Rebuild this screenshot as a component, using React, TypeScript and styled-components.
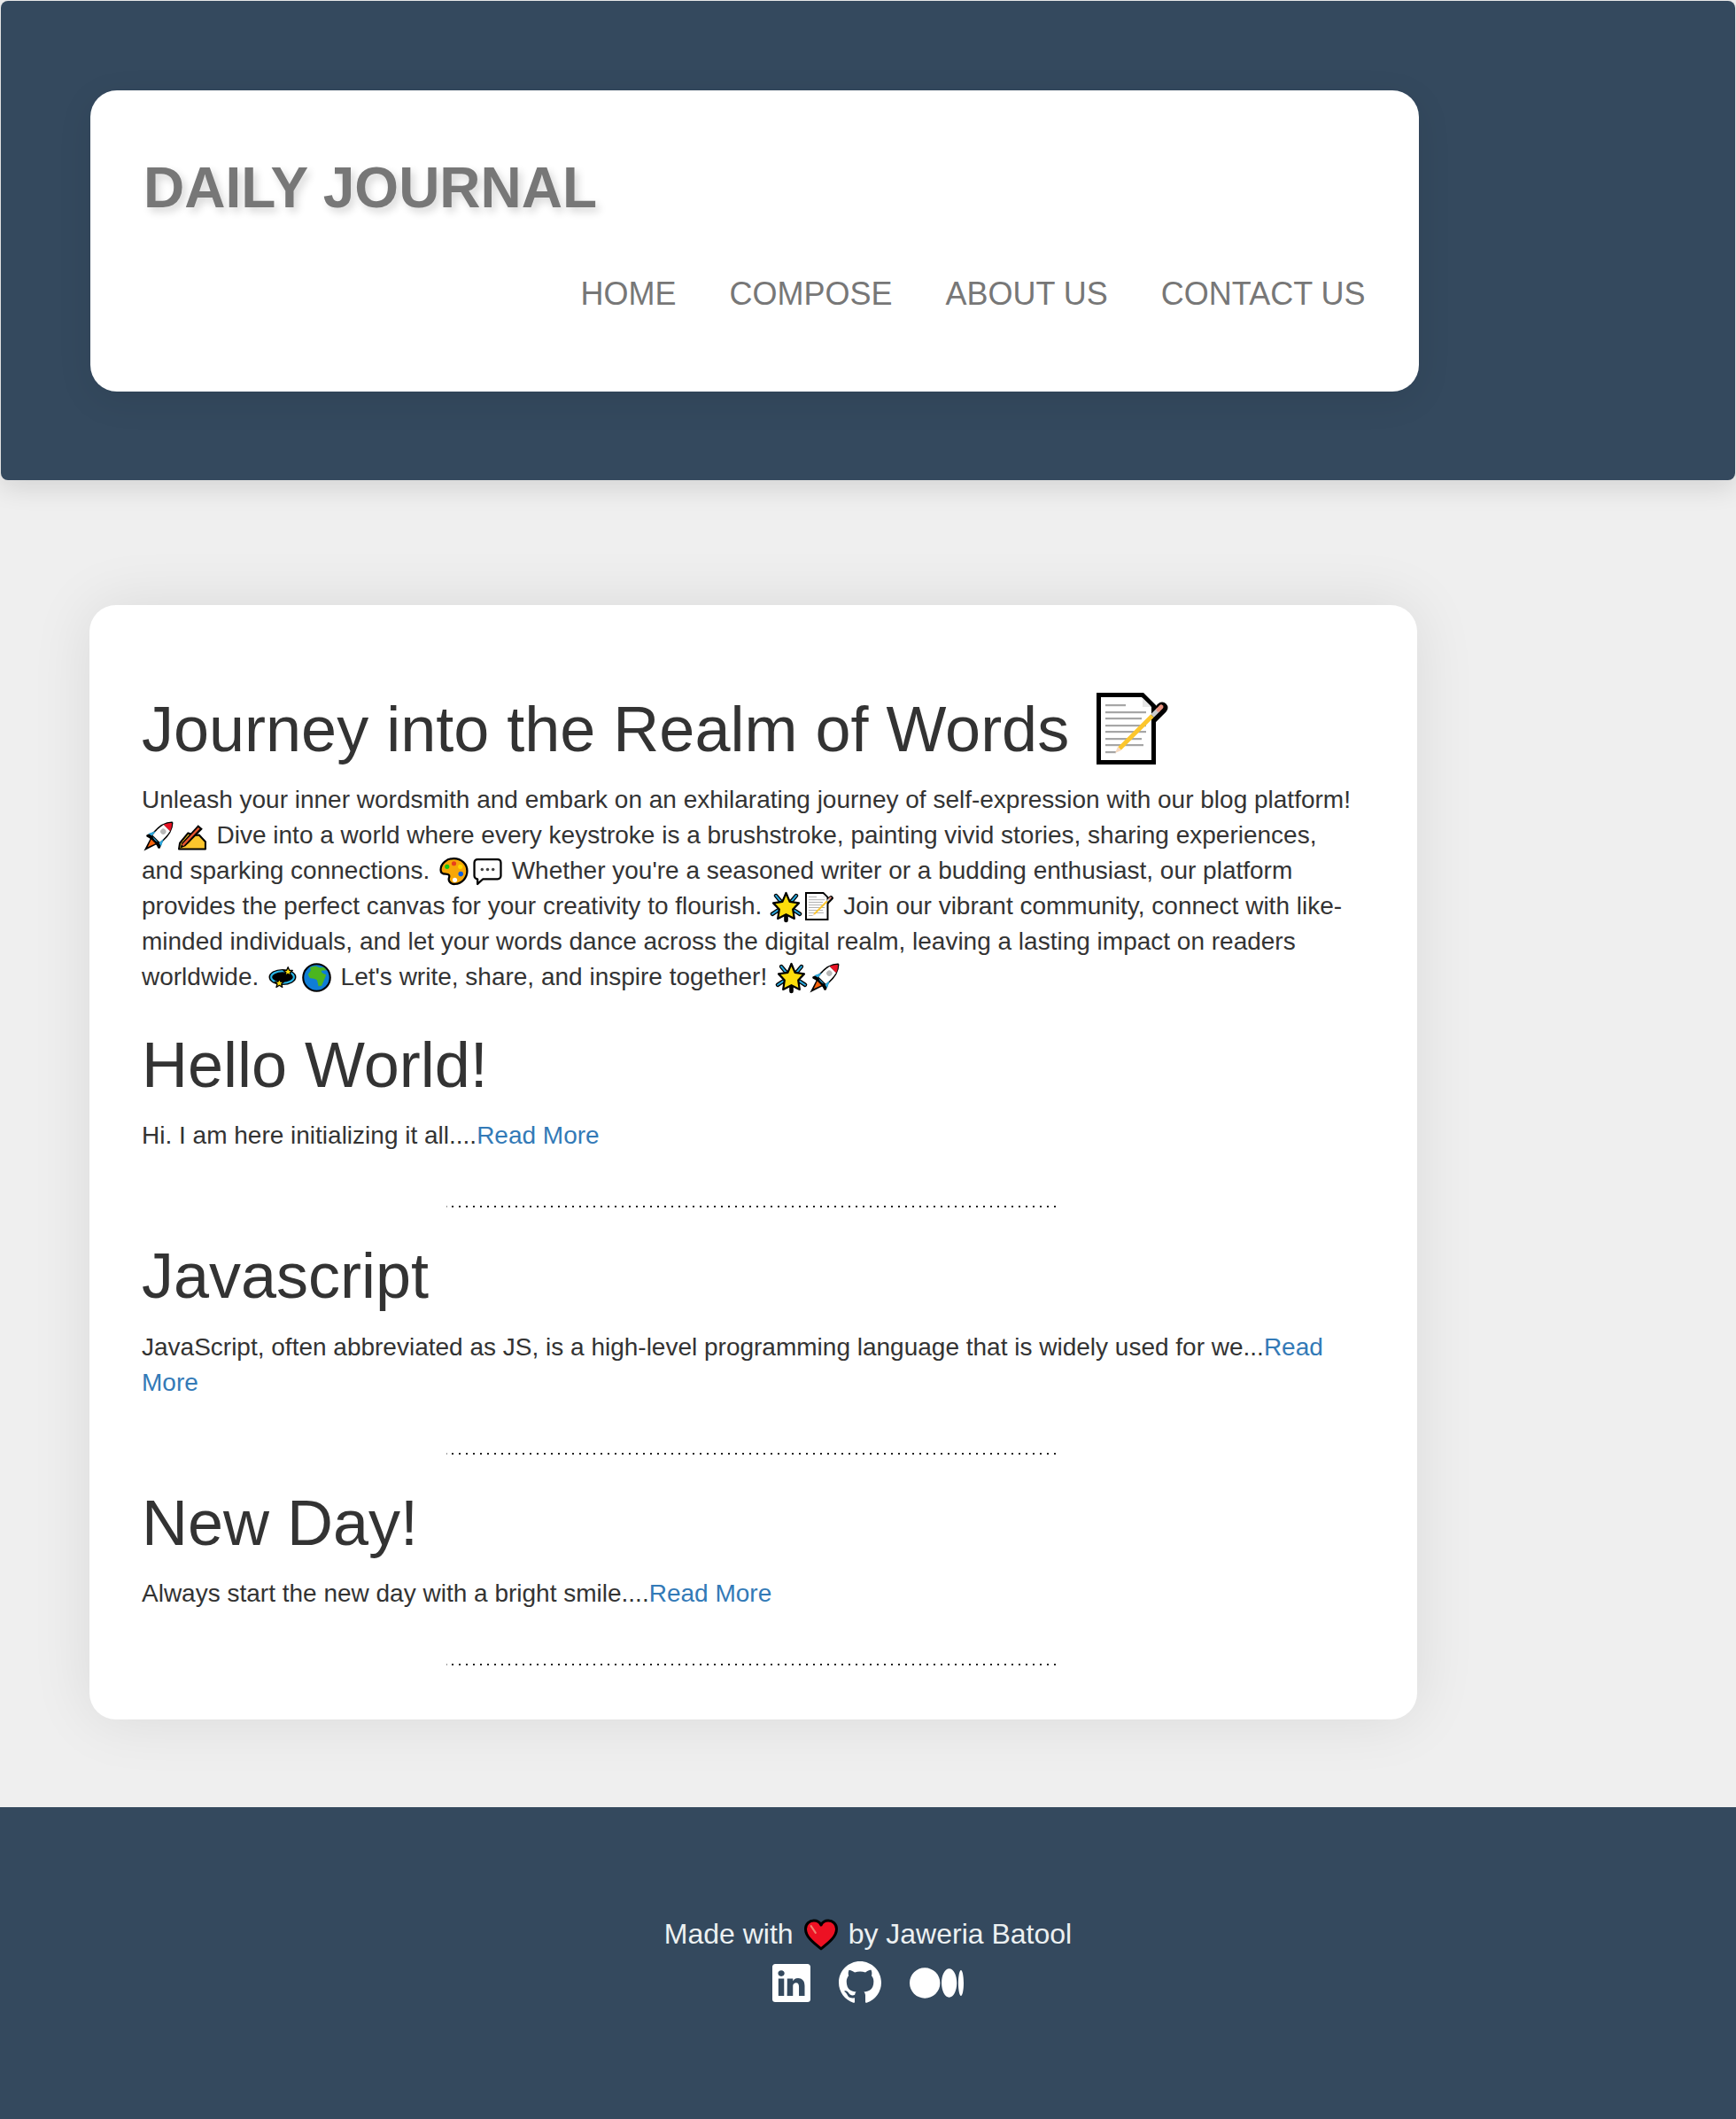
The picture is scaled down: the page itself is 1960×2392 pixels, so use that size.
import React from 'react';
import styled, { createGlobalStyle } from 'styled-components';
import { BsGithub, BsLinkedin, BsMedium } from 'react-icons/bs';

const GlobalStyle = createGlobalStyle`
  html, body {
    margin: 0;
    padding: 0;
    background: #efefef;
  }
  * {
    box-sizing: border-box;
  }
`;

const Page = styled.div`
  font-family: 'Liberation Sans', Arial, Helvetica, sans-serif;
  font-size: 28px;
  line-height: 40px;
  color: #333;
  width: 1960px;
  padding-top: 1px;
`;

const Header = styled.header`
  margin: 0 1px;
  padding: 101px 357px 100px 101px;
  height: 541px;
  background: #34495e;
  border-radius: 8px;
  box-shadow: 0 8px 30px rgba(0, 0, 0, 0.12);
`;

const Navbar = styled.div`
  height: 340px;
  padding: 60px 60.5px 60px 60px;
  background: #fff;
  border-radius: 30px;
  box-shadow: 0 10px 40px rgba(0, 0, 0, 0.08);
`;

const Brand = styled.div`
  font-size: 64px;
  line-height: 100px;
  font-weight: 700;
  color: #777;
  text-shadow: 4px 5px 10px rgba(0, 0, 0, 0.16);
`;

const Nav = styled.nav`
  display: flex;
  justify-content: flex-end;
  gap: 60px;
  margin-top: 20px;
`;

const NavLink = styled.a`
  padding: 30px 0;
  font-size: 36px;
  line-height: 40px;
  color: #777;
  text-decoration: none;
`;

const Main = styled.main`
  width: 1499px;
  margin: 141px 0 99px 101px;
  padding: 59px 60px 63px 59px;
  background: #fff;
  border-radius: 30px;
  box-shadow: 0 0 70px rgba(0, 0, 0, 0.09);
`;

const Title = styled.h1`
  margin: 40px 0 20px;
  font-size: 72px;
  line-height: 79.2px;
  font-weight: 400;
`;

const Text = styled.p`
  margin: 0;
`;

const MoreLink = styled.a`
  color: #337ab7;
  text-decoration: none;
`;

const Divider = styled.hr`
  width: 692px;
  height: 2px;
  margin: 59px auto -2px;
  border: 0;
  background:
    linear-gradient(#999, #999) 0 0 / 1px 2px no-repeat,
    repeating-linear-gradient(90deg, transparent 0 6px, #222 6px 8px);
`;

const Post = styled.article`
  display: block;
`;

const Footer = styled.footer`
  display: flex;
  flex-direction: column;
  align-items: center;
  min-height: 353px;
  padding-top: 120px;
  background: #34495e;
  color: #ecf0f1;
  font-size: 32px;
  line-height: 46px;
`;

const Credit = styled.div`
  display: flex;
  align-items: center;
  gap: 13px;
`;

const Socials = styled.div`
  display: flex;
  align-items: center;
  gap: 32px;
  height: 65px;
  color: #fff;
`;

const EmojiSvg = styled.svg<{ $size: number; $drop: number; $gap: number }>`
  display: inline-block;
  width: ${p => p.$size}px;
  height: ${p => p.$size}px;
  margin: 0 ${p => p.$gap}px;
  vertical-align: -${p => p.$drop}px;
  overflow: visible;
`;

type EmojiProps = { size?: number; drop?: number; gap?: number; children?: React.ReactNode };

const Emoji = ({ size = 33, drop = 8, gap = 2.7, children }: EmojiProps) => (
  <EmojiSvg viewBox="0 0 32 32" $size={size} $drop={drop} $gap={gap} aria-hidden="true">
    {children}
  </EmojiSvg>
);

const Memo = (props: EmojiProps) => (
  <EmojiSvg
    viewBox="0 0 81 81"
    $size={props.size ?? 32}
    $drop={props.drop ?? 7}
    $gap={props.gap ?? 3}
    aria-hidden="true"
  >
    <path d="M0 0H53L67 14V81H0Z" fill="#000" />
    <path d="M61 30L74 17" stroke="#000" strokeWidth="13" strokeLinecap="round" />
    <path d="M5 5H51L62 16V76H5Z" fill="#fff" />
    <path d="M52 6L61 15V16H52Z" fill="#e6e6e6" />
    <g fill="#a6a6a6">
      <rect x="10" y="13" width="23" height="2.2" />
      <rect x="10" y="21" width="46" height="2.2" />
      <rect x="10" y="28" width="41" height="2.2" />
      <rect x="10" y="36" width="46" height="2.2" />
      <rect x="10" y="43" width="46" height="2.2" />
      <rect x="10" y="51" width="41" height="2.2" />
      <rect x="10" y="58" width="43" height="2.2" />
      <rect x="10" y="66" width="12" height="2.2" />
    </g>
    <path d="M26 63L63 26" stroke="#fcc62d" strokeWidth="5" />
    <path d="M63 26L70 19" stroke="#c9c9c9" strokeWidth="5" />
    <path d="M70 19L73 16" stroke="#ea9380" strokeWidth="5" strokeLinecap="round" />
    <path d="M28 65L24 61L21 68Z" fill="#f5d9c0" />
  </EmojiSvg>
);

const Rocket = () => (
  <Emoji>
    <g transform="rotate(45 16 16) translate(16 16) scale(1.1) translate(-16 -15)">
      <path d="M16 -3C21 2 22 9 21.500 17L24 23L21 22L11 22L8 23L10.500 17C10 9 11 2 16 -3Z" fill="#000" stroke="#000" strokeWidth="2.600" strokeLinejoin="round" />
      <path d="M16 -3C18.500 -1 20 2 20.500 4H11.500C12 2 13.500 -1 16 -3Z" fill="#e81224" />
      <path d="M11.500 4H20.500C21.500 9 21.500 14 21 19H11C10.500 14 10.500 9 11.500 4Z" fill="#fff" />
      <path d="M10.500 14L7 21L11 20ZM21.500 14L25 21L21 20Z" fill="#2aa9e0" />
      <path d="M12 20H20L16 21.500Z" fill="#2aa9e0" />
      <path d="M12.500 22H19.500L16 33Z" fill="#000" stroke="#000" strokeWidth="2" />
      <path d="M13 23H19L16 31Z" fill="#f7630c" />
      <circle cx="16" cy="9" r="2.800" fill="#b8b8b8" />
    </g>
  </Emoji>
);

const WritingHand = () => (
  <Emoji>
    <path d="M1 30.500L2 24L11 13L18 15.500L23 15L30 22.500V30.500Z" fill="#fcc62d" stroke="#000" strokeWidth="2" strokeLinejoin="round" />
    <path d="M5 21H15L12 25H6Z" fill="#d9a221" />
    <path d="M2.500 29.500L4 24L22 4L27 8.500L8 27.500Z" fill="#000" />
    <path d="M5 26.500L23 7.500" stroke="#e7562f" strokeWidth="2.400" />
  </Emoji>
);

const Palette = () => (
  <Emoji>
    <path d="M16 2C8 2 1.500 7.500 1.500 14.500C1.500 18 4 19 7 19C11 19 11.500 21 10.500 23.500C9.500 27 13 30.500 17 30C25 29.500 30.500 23 30.500 15.500C30.500 8 24 2 16 2Z" fill="#f7a707" stroke="#000" strokeWidth="2.200" />
    <circle cx="8.500" cy="11" r="2.500" fill="#16c60c" />
    <circle cx="16" cy="7.500" r="2.500" fill="#e8401c" />
    <circle cx="23" cy="11" r="2.500" fill="#ffd800" />
    <circle cx="23.500" cy="19" r="2.700" fill="#0b5ce0" />
    <circle cx="17" cy="25.500" r="2.500" fill="#fff" />
  </Emoji>
);

const Balloon = () => (
  <Emoji>
    <path d="M5 3H27C29 3 30.500 4.500 30.500 6.500V21C30.500 23 29 24.500 27 24.500H11L5 30V24.500C3 24.500 1.500 23 1.500 21V6.500C1.500 4.500 3 3 5 3Z" fill="#fff" stroke="#000" strokeWidth="2.200" strokeLinejoin="round" />
    <circle cx="10" cy="14" r="1.700" fill="#444" />
    <circle cx="16" cy="14" r="1.700" fill="#444" />
    <circle cx="22" cy="14" r="1.700" fill="#444" />
  </Emoji>
);

const Burst = () => (
  <Emoji>
    <path d="M27 4L22 10M5 4L10 10M31 24L25 20M1 24L7 20M16 31V26" stroke="#000" strokeWidth="4.500" strokeLinecap="round" />
    <path d="M27 4L22 10M5 4L10 10M31 24L25 20M1 24L7 20" stroke="#29a8de" strokeWidth="2" strokeLinecap="round" />
    <path d="M16 1L20 10.500L30 12L23.500 19L25 29L16 24.500L7 29L8.500 19L2 12L12 10.500Z" fill="#fcdd0b" stroke="#000" strokeWidth="2.200" strokeLinejoin="round" />
  </Emoji>
);

const Orbit = () => (
  <Emoji>
    <ellipse cx="15.500" cy="15.500" rx="15" ry="8.800" fill="#000" />
    <ellipse cx="15.500" cy="15.500" rx="12.500" ry="6.500" fill="none" stroke="#29b6e8" strokeWidth="2" />
    <path d="M21.500 4.500L23 8L26.500 8.200L23.800 10.500L24.800 14L21.500 12L18.200 14L19.200 10.500L16.500 8.200L20 8Z" fill="#fcdd0b" stroke="#000" strokeWidth="1.300" strokeLinejoin="round" />
    <path d="M12 17L13.500 20.500L17 20.700L14.300 23L15.300 26.500L12 24.500L8.700 26.500L9.700 23L7 20.700L10.500 20.500Z" fill="#fcdd0b" stroke="#000" strokeWidth="1.300" strokeLinejoin="round" />
  </Emoji>
);

const Globe = () => (
  <Emoji>
    <circle cx="16" cy="16" r="14.800" fill="#0f7dd6" stroke="#000" strokeWidth="2" />
    <path d="M9 4.500L15 3.500L19 5L24 4.800L27 8L21 8.500L22 11L26.500 13L24 19L21.500 25L18 25.500L16.500 19L14 17.500L8.500 16.500L6.500 12.500L9.500 8.500Z" fill="#4bb51e" />
  </Emoji>
);

const Heart = () => (
  <Emoji size={40} drop={8} gap={-2}>
    <path d="M16 29.500C9 24 2 18.500 2 11.500C2 7 5.500 4 9.500 4C12 4 14.500 5 16 8C17.500 5 20 4 22.500 4C26.500 4 30 7 30 11.500C30 18.500 23 24 16 29.500Z" fill="#ed1123" stroke="#000" strokeWidth="2.400" strokeLinejoin="round" />
    <path d="M7 9L11 15" stroke="#f0826f" strokeWidth="1.800" strokeLinecap="round" />
  </Emoji>
);

const MediumIcon = styled(BsMedium)`
  width: 61px;
  height: 61px;
`;
const GithubIcon = styled(BsGithub)`
  width: 48px;
  height: 48px;
`;
const LinkedinIcon = styled(BsLinkedin)`
  width: 43px;
  height: 43px;
`;

const posts = [
  { title: 'Hello World!', body: 'Hi. I am here initializing it all....' },
  {
    title: 'Javascript',
    body: 'JavaScript, often abbreviated as JS, is a high-level programming language that is widely used for we...',
  },
  { title: 'New Day!', body: 'Always start the new day with a bright smile....' },
];

export default function App() {
  return (
    <Page>
      <GlobalStyle />
      <Header>
        <Navbar>
          <Brand>DAILY JOURNAL</Brand>
          <Nav>
            <NavLink>HOME</NavLink>
            <NavLink>COMPOSE</NavLink>
            <NavLink>ABOUT US</NavLink>
            <NavLink>CONTACT US</NavLink>
          </Nav>
        </Navbar>
      </Header>

      <Main>
        <Title>
          Journey into the Realm of Words <Memo size={81} drop={15} gap={11} />
        </Title>
        <Text>
          Unleash your inner wordsmith and embark on an exhilarating journey of self-expression with our blog
          platform! <Rocket />
          <WritingHand /> Dive into a world where every keystroke is a brushstroke, painting vivid stories, sharing
          experiences, and sparking connections. <Palette />
          <Balloon /> Whether you're a seasoned writer or a budding enthusiast, our platform provides the perfect
          canvas for your creativity to flourish. <Burst />
          <Memo /> Join our vibrant community, connect with like-minded individuals, and let your words dance across
          the digital realm, leaving a lasting impact on readers worldwide. <Orbit />
          <Globe /> Let's write, share, and inspire together! <Burst />
          <Rocket />
        </Text>
        {posts.map(post => (
          <Post key={post.title}>
            <Title>{post.title}</Title>
            <Text>
              {post.body}
              <MoreLink>Read More</MoreLink>
            </Text>
            <Divider />
          </Post>
        ))}
      </Main>

      <Footer>
        <Credit>
          <span>Made with</span>
          <Heart />
          <span>by Jaweria Batool</span>
        </Credit>
        <Socials>
          <LinkedinIcon />
          <GithubIcon />
          <MediumIcon />
        </Socials>
      </Footer>
    </Page>
  );
}
